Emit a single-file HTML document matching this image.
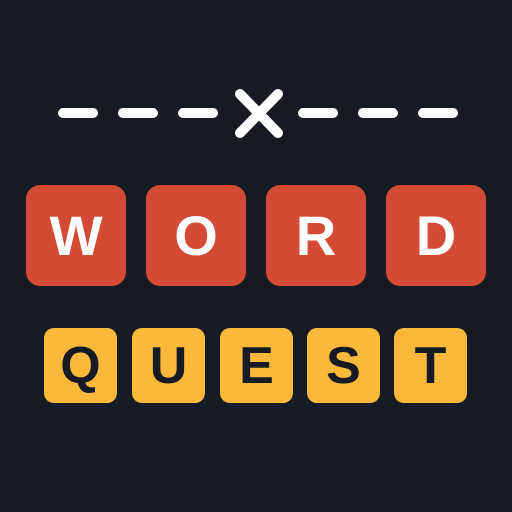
<!DOCTYPE html>
<html><head><style>
html,body{margin:0;padding:0;}
body{width:512px;height:512px;background:#161a22;position:relative;overflow:hidden;font-family:"Liberation Sans",sans-serif;font-weight:bold;}
.t{position:absolute;display:flex;align-items:center;justify-content:center;}
.r{top:185px;width:100px;height:101px;background:#d44a35;border-radius:14px;color:#fff;font-size:56px;}
.y{top:328px;width:73px;height:75px;background:#fbb93b;border-radius:10px;color:#161a22;font-size:52px;}
</style></head><body>
<svg width="512" height="512" style="position:absolute;left:0;top:0">
<g stroke="#fff" stroke-width="10" stroke-linecap="round">
<line x1="63" y1="113" x2="93" y2="113"/><line x1="123" y1="113" x2="153" y2="113"/><line x1="183" y1="113" x2="213" y2="113"/>
<line x1="303" y1="113" x2="333" y2="113"/><line x1="363" y1="113" x2="393" y2="113"/><line x1="423" y1="113" x2="453" y2="113"/>
<line x1="240" y1="94" x2="278" y2="133"/><line x1="278" y1="94" x2="240" y2="133"/>
</g></svg>
<div class="t r" style="left:26px">W</div>
<div class="t r" style="left:146px">O</div>
<div class="t r" style="left:266px">R</div>
<div class="t r" style="left:386px">D</div>
<div class="t y" style="left:44px">Q</div>
<div class="t y" style="left:132px">U</div>
<div class="t y" style="left:220px">E</div>
<div class="t y" style="left:307px">S</div>
<div class="t y" style="left:394px">T</div>
</body></html>
